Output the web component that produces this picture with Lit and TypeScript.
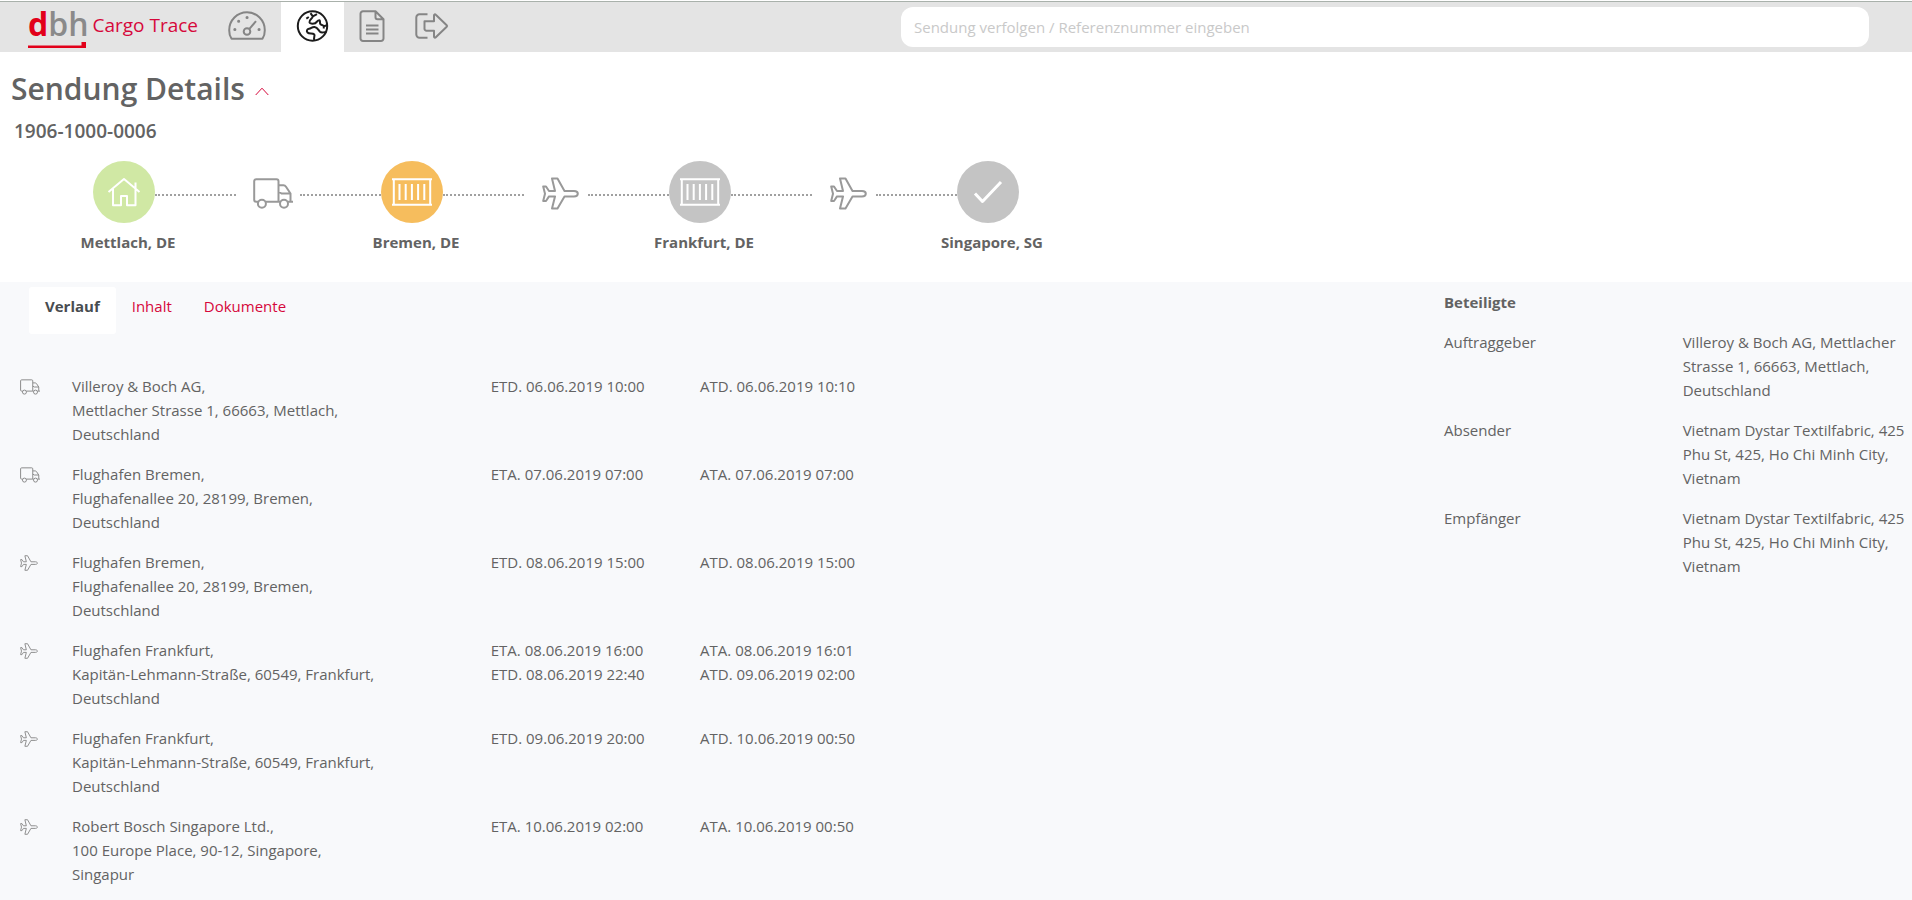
import { LitElement, html, css, svg } from "lit";
import { customElement, property, state } from "lit/decorators.js";
import { classMap } from "lit/directives/class-map.js";

type IconName =
  | "gauge" | "globe" | "document" | "exit" | "chevron"
  | "house" | "container" | "check" | "truck" | "plane";

const ICONS: Record<IconName, { box: string; body: unknown }> = {
  gauge: {
    box: "0 0 38 30",
    body: svg`<path d="M3.5 27.7C1.8 25.4 1.2 22.2 1.2 19.2A17.8 17.9 0 0 1 36.8 19.2C36.8 22.2 36.2 25.4 34.5 27.7Z"/>
      <circle cx="19" cy="20.5" r="3.3"/><path d="M21.4 17.8 28 10.2"/>
      <path class="dot" d="M6.8 18.5h.1M10.6 10.2h.1M19 6.5h.1M31 18.5h.1"/>`,
  },
  globe: {
    box: "0 0 32 32",
    body: svg`<circle cx="16" cy="16" r="14.7"/>
      <path d="M9.800 8.600 12.300 7M14 3.200 16.300 6.400 20.500 4.200M16.300 6.400C16 9 12.500 9.500 13 12.300 13.500 14 15.500 13.800 17.500 13.600 20 13.300 20.300 10.300 23 10.300 24.200 11.500 22.800 13 24 14.200 25 15.200 26.500 14.700 27.300 16.200M27.300 16.200 30.500 15.300M27.300 16.200V18.500"/>
      <path d="M30 22.500C27.500 21.500 25.500 23.500 23.500 21.800 21.800 20 21 17.300 18 17 15.500 16.800 14.800 18.300 12.500 18.700 10.300 19.200 9.800 21 11 22.500 12.800 24.600 16 22.600 17.800 24.500 18.800 26 16.500 27.500 18 30.200"/>`,
  },
  document: {
    box: "0 0 26 33",
    body: svg`<path d="M4 1.200H16.500L24.500 9.200V28.500A2.500 2.500 0 0 1 22 31H4A2.500 2.500 0 0 1 1.500 28.500V3.700A2.500 2.500 0 0 1 4 1.200ZM16.500 1.200V7.200A2 2 0 0 0 18.500 9.200H24.500M7 15.500H19.500M7 19.500H19.500M7 23.500H19.500"/>`,
  },
  exit: {
    box: "0 0 34 26",
    body: svg`<path d="M12.500 1.300H4.500A3.200 3.200 0 0 0 1.300 4.500V21.500A3.200 3.200 0 0 0 4.500 24.700H12.500"/>
      <path d="M9.500 8.300H19V2.500C19 1.300 20 1 20.800 1.800L31.700 12.200Q32.500 13 31.700 13.800L20.800 24.200C20 25 19 24.700 19 23.500V17.700H11.500A2 2 0 0 1 9.500 15.700Z"/>`,
  },
  chevron: { box: "0 0 14 9", body: svg`<path d="M.7 8 7 1.200 13.300 8"/>` },
  house: {
    box: "0 0 34 30",
    body: svg`<path d="M1.500 15 17 2 32.500 15M6 12V28.300H14V19H20V28.300H28.500V12M28.500 5.500V11"/>`,
  },
  container: {
    box: "0 0 40 28",
    body: svg`<path d="M0 1.200H40M0 26.800H40M1.800 1V27M38.200 1V27M7.500 6V22M13.700 6V22M19.900 6V22M26.100 6V22M32.300 6V22"/>`,
  },
  check: { box: "0 0 30 24", body: svg`<path d="M2 13.500 9.500 21.500 28 2"/>` },
  truck: {
    box: "0 0 40 31",
    body: svg`<path d="M5 23.700H3.200A2 2 0 0 1 1.200 21.700V3.200A2 2 0 0 1 3.200 1.200H23.500A2 2 0 0 1 25.500 3.200V23.700H12.500M25.500 7.300H30.500Q32 7.300 33 8.800L37.500 15.500V23.200M25.500 13.500 28.500 15.500H37.500M25.500 23.700H27M34.800 23.700H40"/>
      <circle cx="8.900" cy="25.700" r="4"/><circle cx="31" cy="25.700" r="4"/>`,
  },
  plane: {
    box: "0 0 37 33",
    body: svg`<path d="M1.200 9.500H4L7 14H13L10 1.500H15.500L22.500 14H32C34.500 14 35.800 15.500 35.800 16.700S34.500 19.400 32 19.400H22.500L15.500 31.500H10L13 19.400H7L4 24H1.200L3 16.700Z"/>`,
  },
};

@customElement("ct-icon")
export class CtIcon extends LitElement {
  @property() name: IconName = "truck";

  static styles = css`
    :host { display: block; }
    .glyph {
      display: block;
      width: 100%;
      height: 100%;
      fill: none;
      stroke: currentColor;
      stroke-width: var(--icon-stroke, 2);
      stroke-linejoin: round;
    }
    .dot { stroke-width: 3; stroke-linecap: round; }
  `;

  render() {
    const icon = ICONS[this.name];
    return html`<svg class="glyph" viewBox=${icon.box} aria-hidden="true">${icon.body}</svg>`;
  }
}

interface Stop { place: string; icon: IconName; status: string; via?: IconName }
interface Leg { icon: IconName; address: string[]; planned: string[]; actual: string[] }

const NAV: { icon: IconName; label: string }[] = [
  { icon: "gauge", label: "Dashboard" },
  { icon: "globe", label: "Sendungen" },
  { icon: "document", label: "Dokumente" },
  { icon: "exit", label: "Abmelden" },
];

const STOPS: Stop[] = [
  { place: "Mettlach, DE", icon: "house", status: "done", via: "truck" },
  { place: "Bremen, DE", icon: "container", status: "current", via: "plane" },
  { place: "Frankfurt, DE", icon: "container", status: "open", via: "plane" },
  { place: "Singapore, SG", icon: "check", status: "open" },
];

const BREMEN = ["Flughafen Bremen,", "Flughafenallee 20, 28199, Bremen,", "Deutschland"];
const FRANKFURT = ["Flughafen Frankfurt,", "Kapitän-Lehmann-Straße, 60549, Frankfurt,", "Deutschland"];

const LEGS: Leg[] = [
  {
    icon: "truck",
    address: ["Villeroy & Boch AG,", "Mettlacher Strasse 1, 66663, Mettlach,", "Deutschland"],
    planned: ["ETD. 06.06.2019 10:00"],
    actual: ["ATD. 06.06.2019 10:10"],
  },
  { icon: "truck", address: BREMEN, planned: ["ETA. 07.06.2019 07:00"], actual: ["ATA. 07.06.2019 07:00"] },
  { icon: "plane", address: BREMEN, planned: ["ETD. 08.06.2019 15:00"], actual: ["ATD. 08.06.2019 15:00"] },
  {
    icon: "plane",
    address: FRANKFURT,
    planned: ["ETA. 08.06.2019 16:00", "ETD. 08.06.2019 22:40"],
    actual: ["ATA. 08.06.2019 16:01", "ATD. 09.06.2019 02:00"],
  },
  { icon: "plane", address: FRANKFURT, planned: ["ETD. 09.06.2019 20:00"], actual: ["ATD. 10.06.2019 00:50"] },
  {
    icon: "plane",
    address: ["Robert Bosch Singapore Ltd.,", "100 Europe Place, 90-12, Singapore,", "Singapur"],
    planned: ["ETA. 10.06.2019 02:00"],
    actual: ["ATA. 10.06.2019 00:50"],
  },
];

const PARTIES = [
  { role: "Auftraggeber", address: "Villeroy & Boch AG, Mettlacher Strasse 1, 66663, Mettlach, Deutschland" },
  { role: "Absender", address: "Vietnam Dystar Textilfabric, 425 Phu St, 425, Ho Chi Minh City, Vietnam" },
  { role: "Empfänger", address: "Vietnam Dystar Textilfabric, 425 Phu St, 425, Ho Chi Minh City, Vietnam" },
];

const TABS = ["Verlauf", "Inhalt", "Dokumente"];

@customElement("app-root")
export class AppRoot extends LitElement {
  @state() private tab = "Verlauf";
  @state() private open = true;

  static styles = css`
    :host {
      display: flex;
      flex-direction: column;
      min-height: 100vh;
      background: #fff;
      color: #636363;
      font: 15px/24px "Segoe UI", "Open Sans", "Noto Sans", sans-serif;
    }
    * { box-sizing: border-box; }
    button { font: inherit; border: 0; background: none; padding: 0; cursor: pointer; }

    .topbar {
      display: flex;
      height: 51px;
      margin-top: 1px;
      border-top: 1px solid #a9b1ab;
      background: #e4e4e4;
    }
    .brand {
      display: flex;
      gap: 4px;
      padding: 3px 15px 0 28px;
      text-decoration: none;
      color: #d6083b;
    }
    .logo {
      display: flex;
      flex-direction: column;
      height: 40px;
      font-size: 32px;
      line-height: 37px;
      font-weight: 600;
      color: #8a8a8a;
    }
    .logo-d { color: #e2001a; font-weight: 700; }
    .underline { display: block; width: 58px; height: 6px; fill: #e2001a; flex: none; }
    .product { font-size: 19px; line-height: 40px; }
    .nav { display: flex; }
    .nav-item { display: grid; place-items: center; padding: 0 15px 2px; color: #858585; }
    .nav-item.active { background: #fff; color: #1c1c1c; }
    .i-gauge { width: 38px; height: 30px; }
    .i-globe { width: 33px; height: 32px; }
    .i-document { width: 26px; height: 33px; }
    .i-exit { width: 34px; height: 26px; }
    .search { flex: 0 1 968px; margin: 5px 43px 5px auto; display: flex; }
    .search-input {
      width: 100%;
      border: 0;
      border-radius: 12px;
      padding: 0 13px;
      background: #fff;
      color: inherit;
      font: inherit;
      outline: none;
    }
    .search-input::placeholder { color: #c9c9c9; opacity: 1; }

    .title-row { display: flex; align-items: center; gap: 10px; padding: 17px 11px 0; }
    .title { margin: 0; font-size: 30px; line-height: 40px; font-weight: 600; }
    .toggle { color: #d6083b; padding-top: 5px; }
    .i-chevron { width: 14px; height: 9px; --icon-stroke: 1; }
    .reference { margin: 10px 0 0; padding: 0 14px; font-size: 19px; line-height: 24px; font-weight: 600; }

    .track { display: flex; align-items: center; padding: 18px 0 0 93px; }
    .circle { display: grid; place-items: center; flex: none; width: 62px; height: 62px; border-radius: 50%; color: #fff; }
    .done { background: #d0e8a4; }
    .current { background: #f6bd5d; }
    .open { background: #c4c4c4; }
    .line { width: 81px; border-top: 2px dotted #a0a0a0; margin-top: 5px; }
    .via { display: grid; place-items: center; width: 64px; padding: 2px 0 0 9px; color: #999; }
    .via .i-truck { width: 40px; height: 31px; }
    .via .i-plane { width: 37px; height: 33px; }
    .i-house { width: 34px; height: 30px; }
    .i-container { width: 40px; height: 28px; }
    .i-check { width: 30px; height: 24px; --icon-stroke: 3; }
    .places { display: grid; grid-template-columns: repeat(4, 144px); column-gap: 144px; padding: 7px 0 28px 56px; }
    .place { text-align: center; font-weight: 700; }

    .details { display: grid; grid-template-columns: 3fr 1fr; flex: 1; background: #f8f9fb; }
    .tabs { display: flex; padding: 5px 29px 0; }
    .tab { height: 47px; padding: 0 16px 10px; border-radius: 3px; color: #d6083b; }
    .tab.selected { background: #fff; color: #484c50; font-weight: 700; }
    .history { width: 100%; table-layout: fixed; border-collapse: collapse; margin-top: 40px; }
    .c-icon { width: 72px; }
    .c-address { width: 29.2%; }
    .c-time { width: 14.6%; }
    .cell { padding: 0 0 16px; vertical-align: top; }
    .leg:last-child .cell { padding-bottom: 0; }
    .cell.icon-cell { padding: 5px 0 0 20px; color: #8c8c8c; }
    .icon-cell .i-truck { width: 20px; height: 16px; }
    .icon-cell .i-plane { width: 18px; height: 16px; }
    .row-line { display: block; }

    .parties { padding: 8px 0 0 10px; }
    .parties-title { margin: 0 0 16px; font-size: 15px; line-height: 24px; font-weight: 700; }
    .party { display: grid; grid-template-columns: 51% 1fr; margin: 0 0 16px; }
    .party-address { margin: 0; padding-right: 4px; }
  `;

  private icon(name: IconName) {
    return html`<ct-icon class="i-${name}" name=${name}></ct-icon>`;
  }

  private lines(items: string[]) {
    return items.map((text) => html`<span class="row-line">${text}</span>`);
  }

  private renderHeader() {
    return html`
      <header class="topbar">
        <a class="brand" href="#">
          <span class="logo">
            <span><span class="logo-d">d</span>bh</span>
            <svg class="underline" viewBox="0 0 58 6" aria-hidden="true"><path d="M0 3.500H53.500V0H58V6H0Z" /></svg>
          </span>
          <span class="product">Cargo Trace</span>
        </a>
        <nav class="nav">
          ${NAV.map(
            (item) => html`<button
              class=${classMap({ "nav-item": true, active: item.icon === "globe" })}
              aria-label=${item.label}
            >${this.icon(item.icon)}</button>`
          )}
        </nav>
        <form class="search" role="search">
          <input
            class="search-input"
            type="search"
            aria-label="Sendung verfolgen"
            placeholder="Sendung verfolgen / Referenznummer eingeben"
          />
        </form>
      </header>
    `;
  }

  private renderRoute() {
    return html`
      <div class="track">
        ${STOPS.map(
          (stop) => html`
            <span class="circle ${stop.status}">${this.icon(stop.icon)}</span>
            ${stop.via
              ? html`<span class="line"></span><span class="via">${this.icon(stop.via)}</span><span class="line"></span>`
              : ""}
          `
        )}
      </div>
      <div class="places">${STOPS.map((stop) => html`<span class="place">${stop.place}</span>`)}</div>
    `;
  }

  private renderHistory() {
    return html`
      <table class="history">
        <colgroup>
          <col class="c-icon" /><col class="c-address" /><col class="c-time" /><col />
        </colgroup>
        <tbody>
          ${LEGS.map(
            (leg) => html`<tr class="leg">
              <td class="cell icon-cell">${this.icon(leg.icon)}</td>
              <td class="cell">${this.lines(leg.address)}</td>
              <td class="cell">${this.lines(leg.planned)}</td>
              <td class="cell">${this.lines(leg.actual)}</td>
            </tr>`
          )}
        </tbody>
      </table>
    `;
  }

  render() {
    return html`
      ${this.renderHeader()}
      <section>
        <div class="title-row">
          <h1 class="title">Sendung Details</h1>
          <button class="toggle" aria-label="Details umschalten" @click=${() => (this.open = !this.open)}>
            ${this.icon("chevron")}
          </button>
        </div>
        <p class="reference">1906-1000-0006</p>
        ${this.open ? this.renderRoute() : ""}
      </section>
      <main class="details">
        <section>
          <div class="tabs" role="tablist">
            ${TABS.map(
              (name) => html`<button
                role="tab"
                aria-selected=${this.tab === name ? "true" : "false"}
                class=${classMap({ tab: true, selected: this.tab === name })}
                @click=${() => (this.tab = name)}
              >${name}</button>`
            )}
          </div>
          ${this.tab === "Verlauf" ? this.renderHistory() : ""}
        </section>
        <aside class="parties">
          <h2 class="parties-title">Beteiligte</h2>
          ${PARTIES.map(
            (party) => html`<dl class="party">
              <dt>${party.role}</dt>
              <dd class="party-address">${party.address}</dd>
            </dl>`
          )}
        </aside>
      </main>
    `;
  }
}
